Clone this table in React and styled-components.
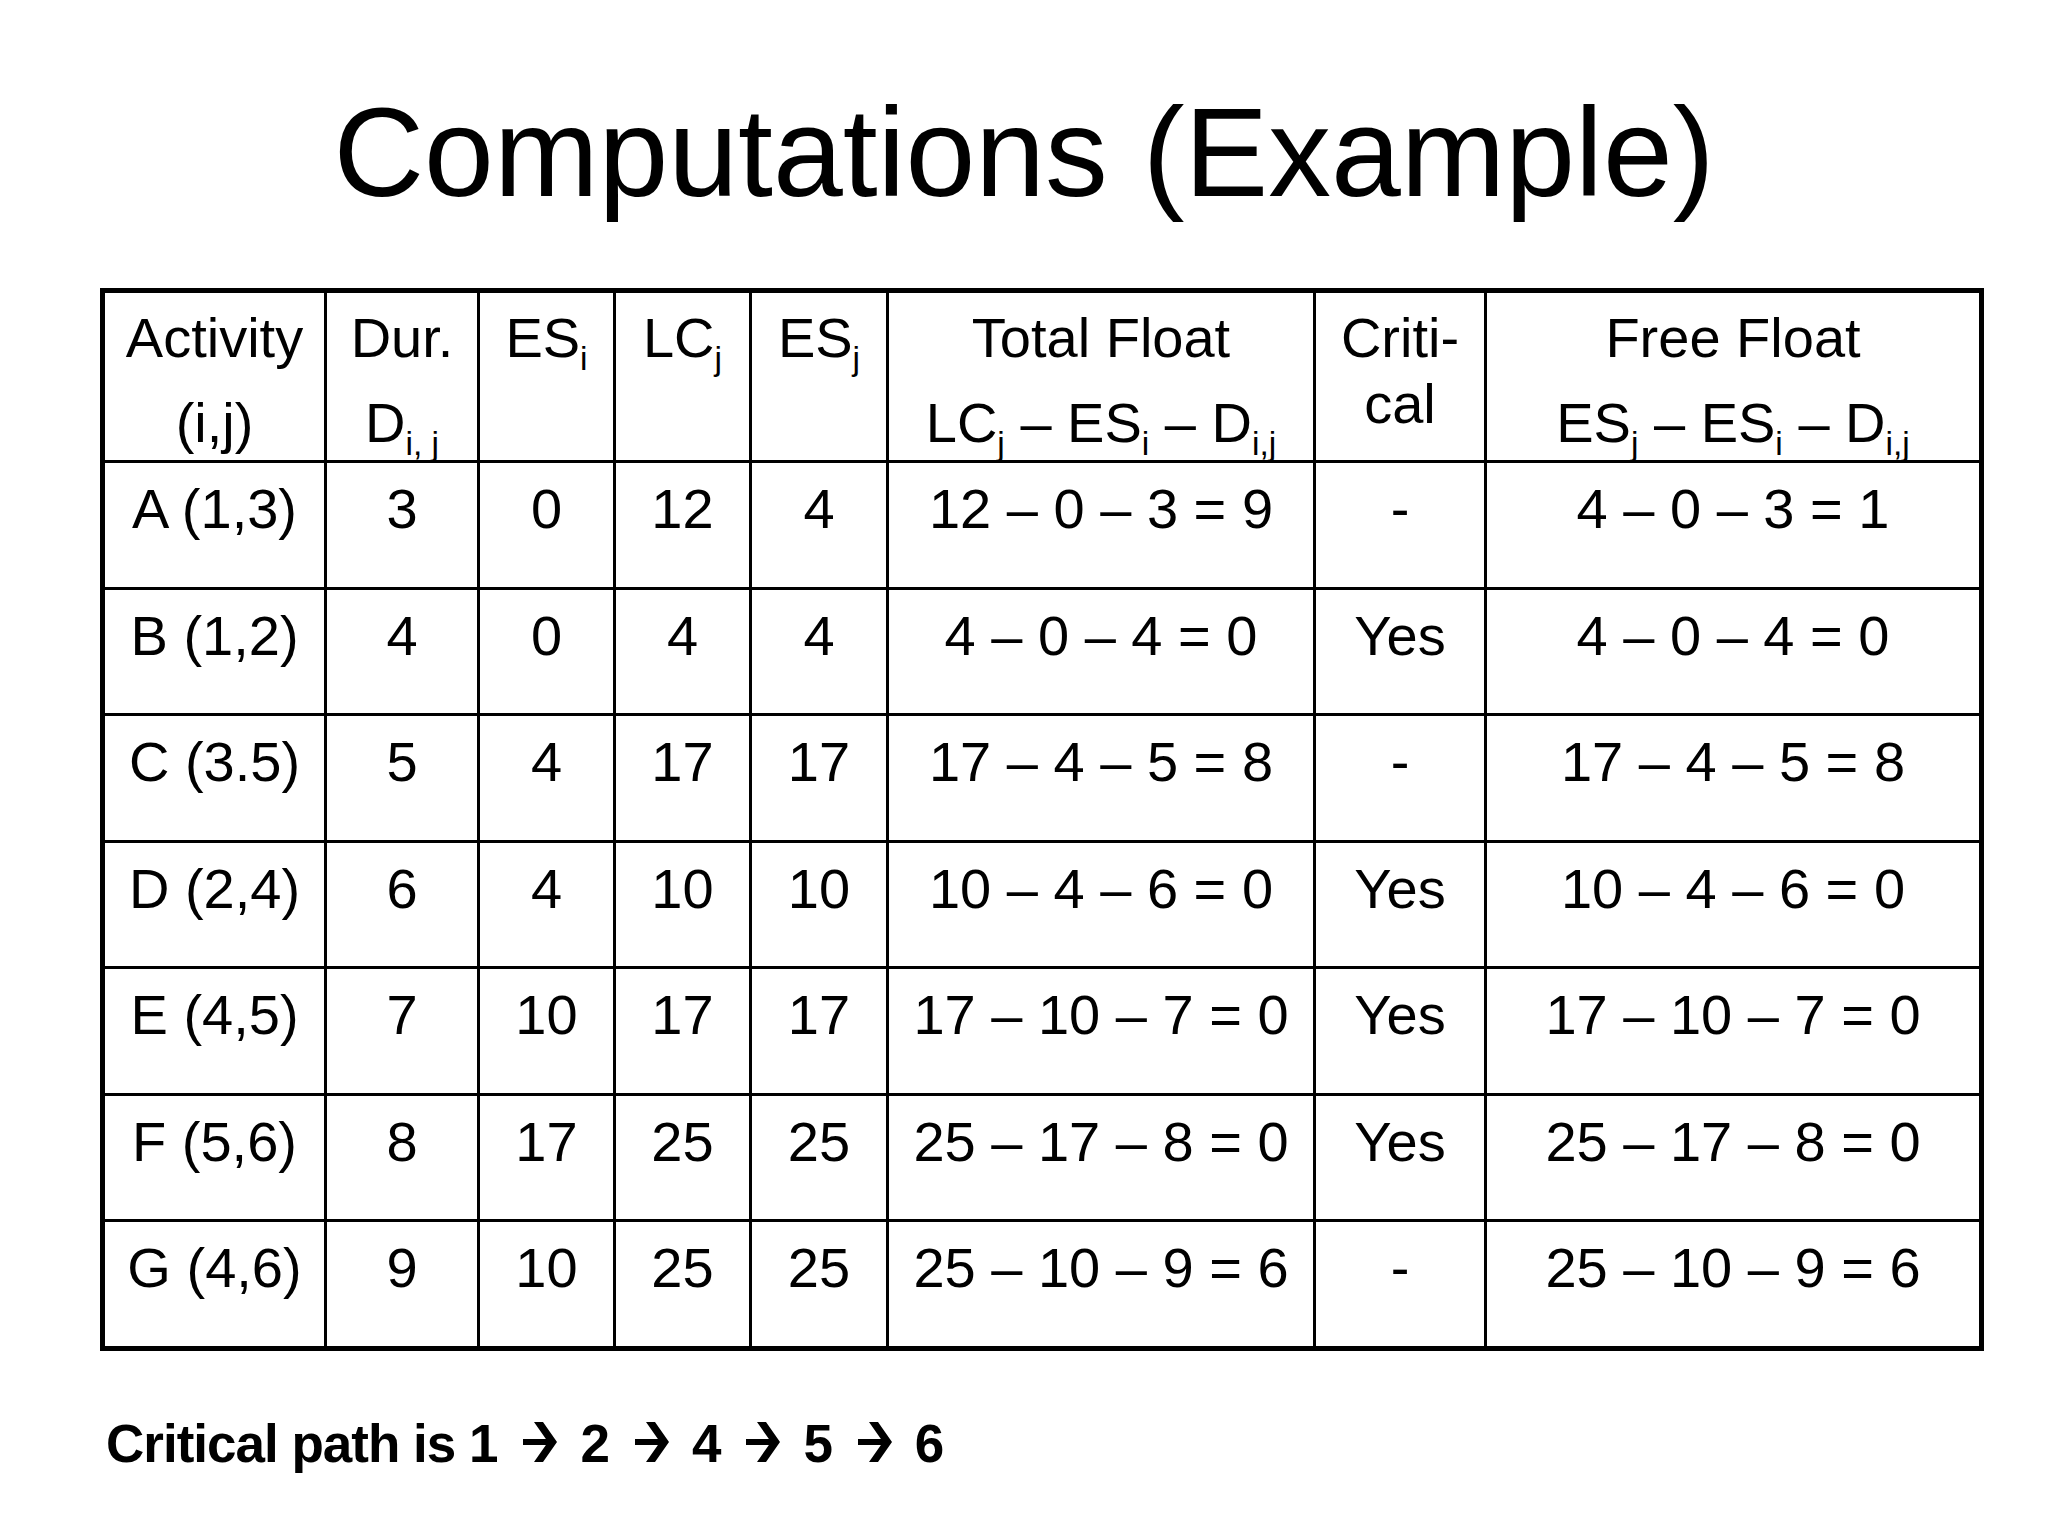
import React from 'react';
import styled, { createGlobalStyle } from 'styled-components';

const GlobalStyle = createGlobalStyle`
  html, body {
    margin: 0;
    padding: 0;
    background: #fff;
  }
  body {
    font-family: "Liberation Sans", Arial, sans-serif;
    color: #000;
  }
`;

const COLUMNS = [219, 150, 133, 133, 134, 424, 168, 492];

const ROWS = [
  ['A (1,3)', '3', '0', '12', '4', '12 – 0 – 3 = 9', '-', '4 – 0 – 3 = 1'],
  ['B (1,2)', '4', '0', '4', '4', '4 – 0 – 4 = 0', 'Yes', '4 – 0 – 4 = 0'],
  ['C (3.5)', '5', '4', '17', '17', '17 – 4 – 5 = 8', '-', '17 – 4 – 5 = 8'],
  ['D (2,4)', '6', '4', '10', '10', '10 – 4 – 6 = 0', 'Yes', '10 – 4 – 6 = 0'],
  ['E (4,5)', '7', '10', '17', '17', '17 – 10 – 7 = 0', 'Yes', '17 – 10 – 7 = 0'],
  ['F (5,6)', '8', '17', '25', '25', '25 – 17 – 8 = 0', 'Yes', '25 – 17 – 8 = 0'],
  ['G (4,6)', '9', '10', '25', '25', '25 – 10 – 9 = 6', '-', '25 – 10 – 9 = 6'],
];

const PATH = ['2', '4', '5', '6'];

// Wingdings-style chevron arrow used in the footnote
function Arrow() {
  return (
    <ArrowSvg viewBox="0 0 34 40" width="34" height="40" aria-hidden="true">
      <rect x="0" y="17" width="26" height="6" fill="#000" />
      <polygon points="11,0 20,0 34,20 20,40 11,40 25,20" fill="#000" />
    </ArrowSvg>
  );
}

export default function App() {
  return (
    <>
      <GlobalStyle />
      <Slide>
        <Title>Computations (Example)</Title>

        <Table $cols={COLUMNS}>
          <HeadCell>Activity<br />(i,j)</HeadCell>
          <HeadCell>Dur.<br />D<Sub>i, j</Sub></HeadCell>
          <HeadCell>ES<Sub>i</Sub></HeadCell>
          <HeadCell>LC<Sub>j</Sub></HeadCell>
          <HeadCell>ES<Sub>j</Sub></HeadCell>
          <HeadCell>
            Total Float<br />
            LC<Sub>j</Sub> – ES<Sub>i</Sub> – D<Sub>i,j</Sub>
          </HeadCell>
          <HeadCell $tight>Criti-<br />cal</HeadCell>
          <HeadCell>
            Free Float<br />
            ES<Sub>j</Sub> – ES<Sub>i</Sub> – D<Sub>i,j</Sub>
          </HeadCell>

          {ROWS.map((row) =>
            row.map((value, i) => <Cell key={row[0] + i}>{value}</Cell>)
          )}
        </Table>

        <Note>
          Critical path is 1
          {PATH.map((step) => (
            <React.Fragment key={step}>
              <Arrow />
              {step}
            </React.Fragment>
          ))}
        </Note>
      </Slide>
    </>
  );
}

// Styled Components
const Slide = styled.div`
  width: 2048px;
  height: 1536px;
  padding-top: 80px;
  box-sizing: border-box;
  background: #fff;
  overflow: hidden;
`;

const Title = styled.h1`
  margin: 0;
  font-size: 125.5px;
  font-weight: 400;
  line-height: 146px;
  text-align: center;
  white-space: nowrap;
`;

const Table = styled.div`
  display: grid;
  width: max-content;
  margin: 62px 0 0 100px;
  grid-template-columns: ${({ $cols }) => $cols.map((w) => `${w}px`).join(' ')};
  grid-template-rows: 167px;
  grid-auto-rows: 123.5px;
  gap: 3px;
  background: #000;
  border: 5px solid #000;
`;

const HeadCell = styled.div`
  background: #fff;
  font-size: 56px;
  text-align: center;
  white-space: nowrap;
  line-height: ${({ $tight }) => ($tight ? '66px' : '85px')};
  padding-top: ${({ $tight }) => ($tight ? '12px' : '2px')};
`;

const Cell = styled.div`
  background: #fff;
  font-size: 56px;
  line-height: 67px;
  padding-top: 12px;
  text-align: center;
  white-space: nowrap;
`;

const Sub = styled.sub`
  font-size: 0.6em;
  line-height: 0;
  vertical-align: -0.38em;
`;

const Note = styled.div`
  margin: 62px 0 0 106px;
  font-size: 53px;
  font-weight: 700;
  letter-spacing: -1px;
  line-height: 62px;
  white-space: nowrap;
`;

const ArrowSvg = styled.svg`
  display: inline-block;
  vertical-align: baseline;
  margin: 0 23px 0 26px;
`;
